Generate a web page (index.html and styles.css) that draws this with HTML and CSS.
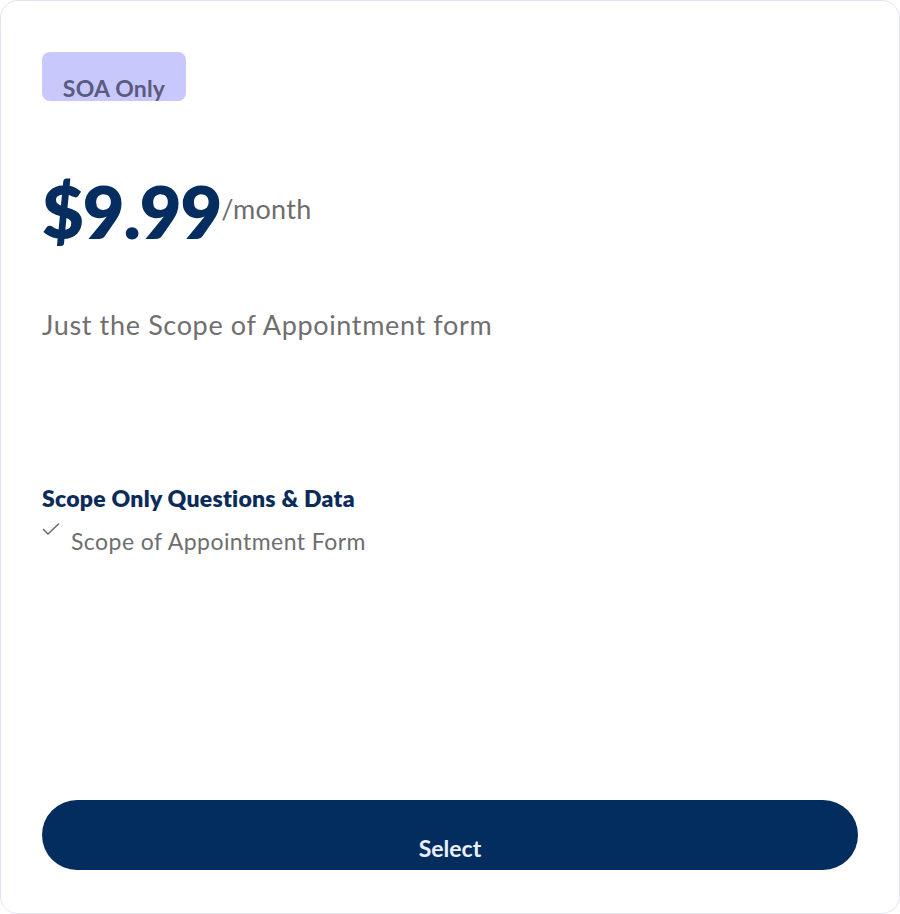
FILE: index.html
```html
<!DOCTYPE html>
<html lang="en">
<head>
<meta charset="utf-8">
<title>SOA Only</title>
<link rel="stylesheet" href="styles.css">
</head>
<body>
<div class="card">
  <div class="badge"><span>SOA Only</span></div>
  <div class="price-row">
    <span class="price">$9.99</span><span class="period">/month</span>
  </div>
  <p class="desc">Just the Scope of Appointment form</p>
  <div class="features">
    <h3 class="feat-title">Scope Only Questions &amp; Data</h3>
    <div class="feat-item">
      <svg class="check" width="18" height="14" viewBox="0 0 18 14" aria-hidden="true"><path d="M1.5 6.5 L6 11 L16.5 1" fill="none" stroke="#6e6e6e" stroke-width="1.6" stroke-linecap="round" stroke-linejoin="round"/></svg>
      <span>Scope of Appointment Form</span>
    </div>
  </div>
  <div class="spacer"></div>
  <button class="select-btn">Select</button>
</div>
</body>
</html>
```

FILE: styles.css
```css
html, body {
  margin: 0;
  padding: 0;
  background: #ffffff;
}
body {
  font-family: "Lato", "Noto Sans", sans-serif;
}
.card {
  width: 900px;
  height: 914px;
  box-sizing: border-box;
  border: 1px solid #e2e4f5;
  border-radius: 18px;
  padding: 51px 41px 43px 41px;
  display: flex;
  flex-direction: column;
}
.badge {
  align-self: flex-start;
  width: 144px;
  height: 49px;
  box-sizing: border-box;
  background: #c9c8fd;
  border-radius: 8px;
  display: flex;
  justify-content: center;
  align-items: flex-end;
  padding-bottom: 1px;
}
.badge span {
  font-size: 23px;
  font-weight: 700;
  color: #5b5b80;
  line-height: 1;
  letter-spacing: 0.2px;
}
.price-row {
  margin-top: 74px;
  display: flex;
  align-items: baseline;
  height: 64px;
}
.price {
  font-size: 72px;
  font-weight: 800;
  color: #062d60;
  line-height: 1;
  letter-spacing: -1px;
}
.period {
  font-size: 27px;
  color: #6d6d6d;
  position: relative;
  top: -20px;
  letter-spacing: 0.3px;
}
.desc {
  margin: 72px 0 0 0;
  font-size: 27px;
  color: #6f6f6f;
  line-height: 1;
  letter-spacing: 0.65px;
}
.features {
  margin-top: 149px;
}
.feat-title {
  margin: 0;
  font-size: 23px;
  font-weight: 800;
  color: #0b2b5b;
  line-height: 1;
  letter-spacing: 0.25px;
}
.feat-item {
  display: flex;
  align-items: flex-start;
  margin-top: 9px;
  font-size: 23px;
  color: #6e6e6e;
}
.check {
  margin-top: 4px;
  margin-right: 11px;
  flex: none;
}
.feat-item span {
  margin-top: 11px;
  line-height: 1;
  letter-spacing: 0.45px;
}
.spacer {
  flex: 1;
}
.select-btn {
  height: 70px;
  width: 816px;
  border: none;
  border-radius: 35px;
  background: #032d5e;
  color: #eaf0fb;
  font-family: "Lato", "Noto Sans", sans-serif;
  font-size: 23px;
  font-weight: 700;
  padding-top: 26px;
  cursor: pointer;
}
```
